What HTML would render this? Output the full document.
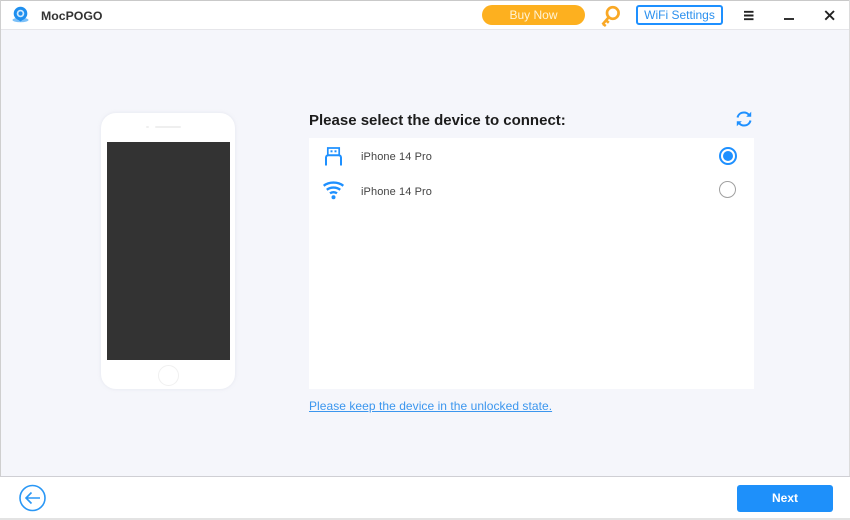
<!DOCTYPE html>
<html>
<head>
<meta charset="utf-8">
<style>
html,body{margin:0;padding:0;width:850px;height:520px;overflow:hidden;background:#f5f6fb;font-family:"Liberation Sans","DejaVu Sans",sans-serif;}
.abs{position:absolute;}
svg{position:absolute;overflow:visible;}
.t{position:absolute;white-space:nowrap;}
</style>
</head>
<body>
<div class="abs" style="left:0;top:0;width:850px;height:520px;background:#f5f6fb;">
  <!-- title bar -->
  <div class="abs" style="left:0;top:0;width:850px;height:29px;background:#fff;"></div>
  <div class="abs" style="left:0;top:29px;width:850px;height:1px;background:#e6e6ea;"></div>
  <div class="abs" style="left:0;top:0;width:850px;height:1px;background:#c9c9c9;"></div>
  <div class="abs" style="left:0;top:0;width:1px;height:520px;background:#cfcfcf;"></div>
  <div class="abs" style="left:849px;top:0;width:1px;height:520px;background:#dcdcdc;"></div>

  <svg style="left:0;top:0" width="40" height="30" viewBox="0 0 40 30">
    <ellipse cx="20.500" cy="20" rx="8" ry="2.300" fill="#7cc0f8"/>
    <circle cx="20.500" cy="13.500" r="6.800" fill="#1e8fef"/>
    <path d="M16.500 18.500l4 3 4-3z" fill="#1e8fef"/>
    <circle cx="20.500" cy="13.500" r="3.800" fill="#cfe8fc"/>
    <circle cx="20.500" cy="13.500" r="2.100" fill="#1e8fef"/>
  </svg>
  <div class="t" style="left:41px;top:9px;font-size:12.300px;line-height:15px;font-weight:700;color:#333;">MocPOGO</div>

  <div class="t" style="left:482px;top:5px;width:103px;height:20px;border-radius:10px;background:#fdb01f;color:#fff3d6;font-size:12px;line-height:20px;text-align:center;">Buy Now</div>

  <svg style="left:598px;top:2px" width="26" height="26" viewBox="0 0 26 26">
    <circle cx="14.800" cy="11" r="5.800" fill="none" stroke="#f9a825" stroke-width="2.700"/>
    <path d="M10.500 15.500L4.500 22.500M5 22l2.800 2M8.200 18.500l2.600 2.200" fill="none" stroke="#f9a825" stroke-width="2.600"/>
  </svg>

  <div class="t" style="left:636px;top:5px;width:83px;height:16px;border:2px solid #1e90ff;border-radius:3px;background:#fff;color:#2b90ee;font-size:12px;line-height:17px;text-align:center;">WiFi Settings</div>

  <svg style="left:740px;top:8px" width="16" height="14" viewBox="0 0 16 14">
    <path d="M4 3.800h9.500M4 7.500h9.500M4 11.200h9.500" stroke="#222" stroke-width="1.900" fill="none"/>
  </svg>
  <div class="abs" style="left:784px;top:18px;width:10px;height:2px;background:#333;"></div>
  <svg style="left:823px;top:9px" width="12" height="12" viewBox="0 0 12 12">
    <path d="M2.300 2l8.700 8.700M11 2l-8.700 8.700" stroke="#222" stroke-width="1.900" fill="none"/>
  </svg>

  <!-- phone -->
  <div class="abs" style="left:101px;top:113px;width:134px;height:276px;background:#fff;border-radius:15px;box-shadow:0 0 3px rgba(210,214,226,.5);"></div>
  <div class="abs" style="left:107px;top:142px;width:123px;height:218px;background:#333;"></div>
  <div class="abs" style="left:155px;top:126px;width:26px;height:2px;border-radius:1px;background:#efefef;"></div>
  <div class="abs" style="left:146px;top:126px;width:3px;height:2px;border-radius:1px;background:#efefef;"></div>
  <div class="abs" style="left:158px;top:365px;width:19px;height:19px;border:1px solid #f0f0f0;border-radius:50%;background:#fff;"></div>

  <!-- right panel -->
  <div class="t" style="left:309px;top:111px;font-size:15px;line-height:19px;font-weight:700;color:#1c1c1c;">Please select the device to connect:</div>

  <svg style="left:735px;top:110px" width="18" height="18" viewBox="0 0 18 18">
    <path d="M2.500 7.500C3.200 4.500 5.700 2.500 9 2.500c2.200 0 3.900 1 5 2.500M15.500 10.500c-.7 3-3.200 5-6.500 5-2.200 0-3.900-1-5-2.500" fill="none" stroke="#1e90ff" stroke-width="2"/>
    <path d="M16.200 1.800v5h-5zM1.800 16.200v-5h5z" fill="#1e90ff"/>
  </svg>

  <div class="abs" style="left:309px;top:138px;width:445px;height:251px;background:#fff;"></div>

  <svg style="left:322px;top:145px" width="24" height="22" viewBox="0 0 24 22">
    <path d="M5.800 10V3h11.400V10" fill="none" stroke="#1e90ff" stroke-width="1.700"/>
    <path d="M4 20.500v-8c0-1.400 1-2.300 2.300-2.300h10.400c1.300 0 2.300.9 2.300 2.300v8" fill="none" stroke="#1e90ff" stroke-width="2"/>
    <rect x="8.500" y="5.300" width="2" height="2" fill="#1e90ff"/>
    <rect x="12.500" y="5.300" width="2" height="2" fill="#1e90ff"/>
  </svg>
  <div class="t" style="left:361px;top:150px;font-size:11px;line-height:14px;color:#444;letter-spacing:.1px;">iPhone 14 Pro</div>

  <svg style="left:322px;top:180px" width="24" height="20" viewBox="0 0 24 20">
    <path d="M1.700 5.800C7 1.500 16 1.500 21.300 5.800M4.800 9.800C8.500 6.800 14.500 6.800 18.200 9.800M8 13.300C10 11.800 13 11.800 15 13.300" fill="none" stroke="#1e90ff" stroke-width="2.300"/>
    <circle cx="11.500" cy="17.200" r="2" fill="#1e90ff"/>
  </svg>
  <div class="t" style="left:361px;top:185px;font-size:11px;line-height:14px;color:#444;letter-spacing:.1px;">iPhone 14 Pro</div>

  <div class="abs" style="left:719px;top:147px;width:14px;height:14px;border:2px solid #1e90ff;border-radius:50%;background:#fff;"></div>
  <div class="abs" style="left:723px;top:151px;width:10px;height:10px;border-radius:50%;background:#1e90ff;"></div>
  <div class="abs" style="left:719px;top:181px;width:15px;height:15px;border:1.500px solid #a0a0a0;border-radius:50%;background:#fff;"></div>

  <div class="t" style="left:309px;top:399px;font-size:12px;line-height:15px;color:#3b96ee;text-decoration:underline;letter-spacing:.05px;">Please keep the device in the unlocked state.</div>

  <!-- footer -->
  <div class="abs" style="left:0;top:476px;width:850px;height:44px;background:#fff;"></div>
  <div class="abs" style="left:0;top:476px;width:850px;height:1px;background:#cfcfd4;"></div>
  <div class="abs" style="left:0;top:518px;width:850px;height:2px;background:#e3e3e3;"></div>

  <svg style="left:18px;top:484px" width="30" height="28" viewBox="0 0 30 28">
    <circle cx="14.500" cy="14" r="12.500" fill="none" stroke="#2a97f5" stroke-width="1.600"/>
    <path d="M22 14H8M13.500 8.500L8 14l5.500 5.500" fill="none" stroke="#2a97f5" stroke-width="1.600"/>
  </svg>

  <div class="t" style="left:737px;top:485px;width:96px;height:27px;border-radius:3px;background:#1e90fa;color:#fff;font-size:12px;line-height:27px;font-weight:700;text-align:center;">Next</div>
</div>
</body>
</html>
